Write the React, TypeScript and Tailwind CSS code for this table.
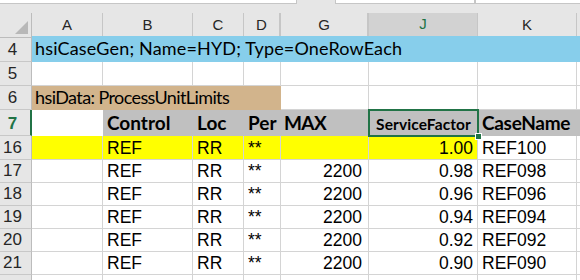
import React from "react";

const GRID = "grid grid-cols-[32px_71px_90px_51px_37px_88px_109px_99px_3px]";
const ARIAL = "font-['Liberation_Sans',Arial,sans-serif]";
const CAL = "font-['Lato','Noto_Sans',sans-serif]";
const LINE = "border-[#d4d4d4]";

function RowHead({ n, active = false }: { n: string; active?: boolean }) {
  return (
    <div
      className={`flex items-end justify-start bg-[#e6e6e6] border-b border-[#c8c8c8] ${
        active ? "border-r-2 border-r-[#217346] text-[#217346]" : "border-r border-r-[#bcbcbc] text-[#262626]"
      } ${ARIAL} text-[17px] leading-[19px] pb-[2px]`}
    >
      <span className="w-[25px] text-center">{n}</span>
    </div>
  );
}

function Cell({
  children,
  className = "",
  right = false,
}: {
  children?: React.ReactNode;
  className?: string;
  right?: boolean;
}) {
  return (
    <div
      className={`flex items-end overflow-visible whitespace-nowrap border-r border-b ${LINE} ${ARIAL} text-[17.5px] leading-[19px] pb-[1px] text-black ${
        right ? "justify-end pr-[4px]" : "pl-[4px]"
      } ${className}`}
    >
      {children}
    </div>
  );
}

function ColHead({ label, active = false, className = "" }: { label: string; active?: boolean; className?: string }) {
  return (
    <div
      className={`flex items-center justify-center border-r border-[#c6c6c6] ${ARIAL} text-[15px] ${
        active
          ? "bg-[#d2d2d2] text-[#217346] border-b-2 border-b-[#217346]"
          : "bg-[#e6e6e6] text-[#262626] border-b border-b-[#bcbcbc]"
      } ${className}`}
    >
      {label}
    </div>
  );
}

const dataRows = [
  { n: "17", max: "2200", sf: "0.98", name: "REF098" },
  { n: "18", max: "2200", sf: "0.96", name: "REF096" },
  { n: "19", max: "2200", sf: "0.94", name: "REF094" },
  { n: "20", max: "2200", sf: "0.92", name: "REF092" },
  { n: "21", max: "2200", sf: "0.90", name: "REF090" },
];

export default function App() {
  return (
    <div className="w-[580px] h-[280px] overflow-hidden bg-white">
      {/* formula bar edge */}
      <div className="h-[13px] bg-[#e6e6e6] flex items-start">
        <div className="w-[297px] h-[4px] bg-white border-b border-r border-[#c6c6c6]" />
        <div className="w-[38px]" />
        <div className="w-[140px] h-[4px] bg-white border-b border-l border-r border-[#c6c6c6]" />
        <div className="flex-1 h-[4px] bg-white border-b border-l border-[#c6c6c6]" />
      </div>

      {/* column headers */}
      <div className={`${GRID} h-[23px]`}>
        <div className="relative bg-[#e6e6e6] border-r border-b border-[#bcbcbc]">
          <svg className="absolute right-[3px] bottom-[3px]" width="13" height="13" viewBox="0 0 13 13">
            <polygon points="13,0 13,13 0,13" fill="#b8b8b8" />
          </svg>
        </div>
        <ColHead label="A" />
        <ColHead label="B" />
        <ColHead label="C" />
        <ColHead label="D" className="border-r-2" />
        <ColHead label="G" className="border-r-2" />
        <ColHead label="J" active />
        <ColHead label="K" />
        <ColHead label="" className="border-r-0" />
      </div>

      {/* row 4 */}
      <div className={`${GRID} h-[26px]`}>
        <RowHead n="4" />
        <div
          className={`col-span-8 flex items-end bg-[#87ceeb] pl-[3px] pb-[4px] ${CAL} text-[18px] tracking-[0.16px] leading-[20px] text-black whitespace-nowrap`}
        >
          hsiCaseGen; Name=HYD; Type=OneRowEach
        </div>
      </div>

      {/* row 5 */}
      <div className={`${GRID} h-[24px]`}>
        <RowHead n="5" />
        <Cell />
        <Cell />
        <Cell />
        <Cell />
        <Cell />
        <Cell />
        <Cell />
        <Cell className="border-r-0" />
      </div>

      {/* row 6 */}
      <div className={`${GRID} h-[24px]`}>
        <RowHead n="6" />
        <div
          className={`col-span-4 flex items-end bg-[#d2b48c] pl-[3px] pb-[3px] ${CAL} text-[18px] tracking-[-0.6px] leading-[20px] text-black whitespace-nowrap`}
        >
          hsiData: ProcessUnitLimits
        </div>
        <Cell />
        <Cell />
        <Cell />
        <Cell className="border-r-0" />
      </div>

      {/* row 7 */}
      <div className={`${GRID} h-[26px] ${CAL} font-bold text-black`}>
        <RowHead n="7" active />
        <div className="bg-white" />
        <div className="flex items-end bg-[#c0c0c0] pl-[4px] pb-[3px] text-[19px] leading-[20px]">Control</div>
        <div className="flex items-end bg-[#c0c0c0] pl-[4px] pb-[3px] text-[19px] leading-[20px]">Loc</div>
        <div className="flex items-end bg-[#c0c0c0] pl-[4px] pb-[3px] text-[19px] leading-[20px]">Per</div>
        <div className="flex items-end bg-[#c0c0c0] pl-[3px] pb-[3px] text-[19px] tracking-[-0.6px] leading-[20px] whitespace-nowrap">
          MAX
        </div>
        <div className="relative flex items-end justify-center bg-[#c0c0c0] pb-[3px] text-[15.5px] tracking-[0.1px] leading-[18px] whitespace-nowrap">
          ServiceFactor
          <div className="absolute -left-[1px] -top-[1px] -right-[1px] -bottom-[1px] border-2 border-[#217346]" />
          <div className="absolute -right-[4px] -bottom-[4px] w-[7px] h-[7px] bg-[#217346] border border-white" />
        </div>
        <div className="flex items-end bg-[#c0c0c0] pl-[4px] pb-[3px] text-[19px] tracking-[-0.3px] leading-[20px] whitespace-nowrap">
          CaseName
        </div>
        <div className="bg-[#c0c0c0]" />
      </div>

      {/* row 16 */}
      <div className={`${GRID} h-[24px]`}>
        <RowHead n="16" />
        <Cell className="bg-[#ffff00] border-0" />
        <Cell className="bg-[#ffff00] border-0">REF</Cell>
        <Cell className="bg-[#ffff00] border-0">RR</Cell>
        <Cell className="bg-[#ffff00] border-0">**</Cell>
        <Cell className="bg-[#ffff00] border-0" right />
        <Cell className="bg-[#ffff00] border-0" right>
          1.00
        </Cell>
        <Cell>REF100</Cell>
        <Cell className="border-r-0" />
      </div>

      {dataRows.map((r) => (
        <div key={r.n} className={`${GRID} h-[23px]`}>
          <RowHead n={r.n} />
          <Cell />
          <Cell>REF</Cell>
          <Cell>RR</Cell>
          <Cell>**</Cell>
          <Cell right className="pr-[6px]">
            {r.max}
          </Cell>
          <Cell right>{r.sf}</Cell>
          <Cell>{r.name}</Cell>
          <Cell className="border-r-0" />
        </div>
      ))}

      <div className={`${GRID} h-[10px]`}>
        <RowHead n="" />
        <Cell />
        <Cell />
        <Cell />
        <Cell />
        <Cell />
        <Cell />
        <Cell />
        <Cell className="border-r-0" />
      </div>
    </div>
  );
}
